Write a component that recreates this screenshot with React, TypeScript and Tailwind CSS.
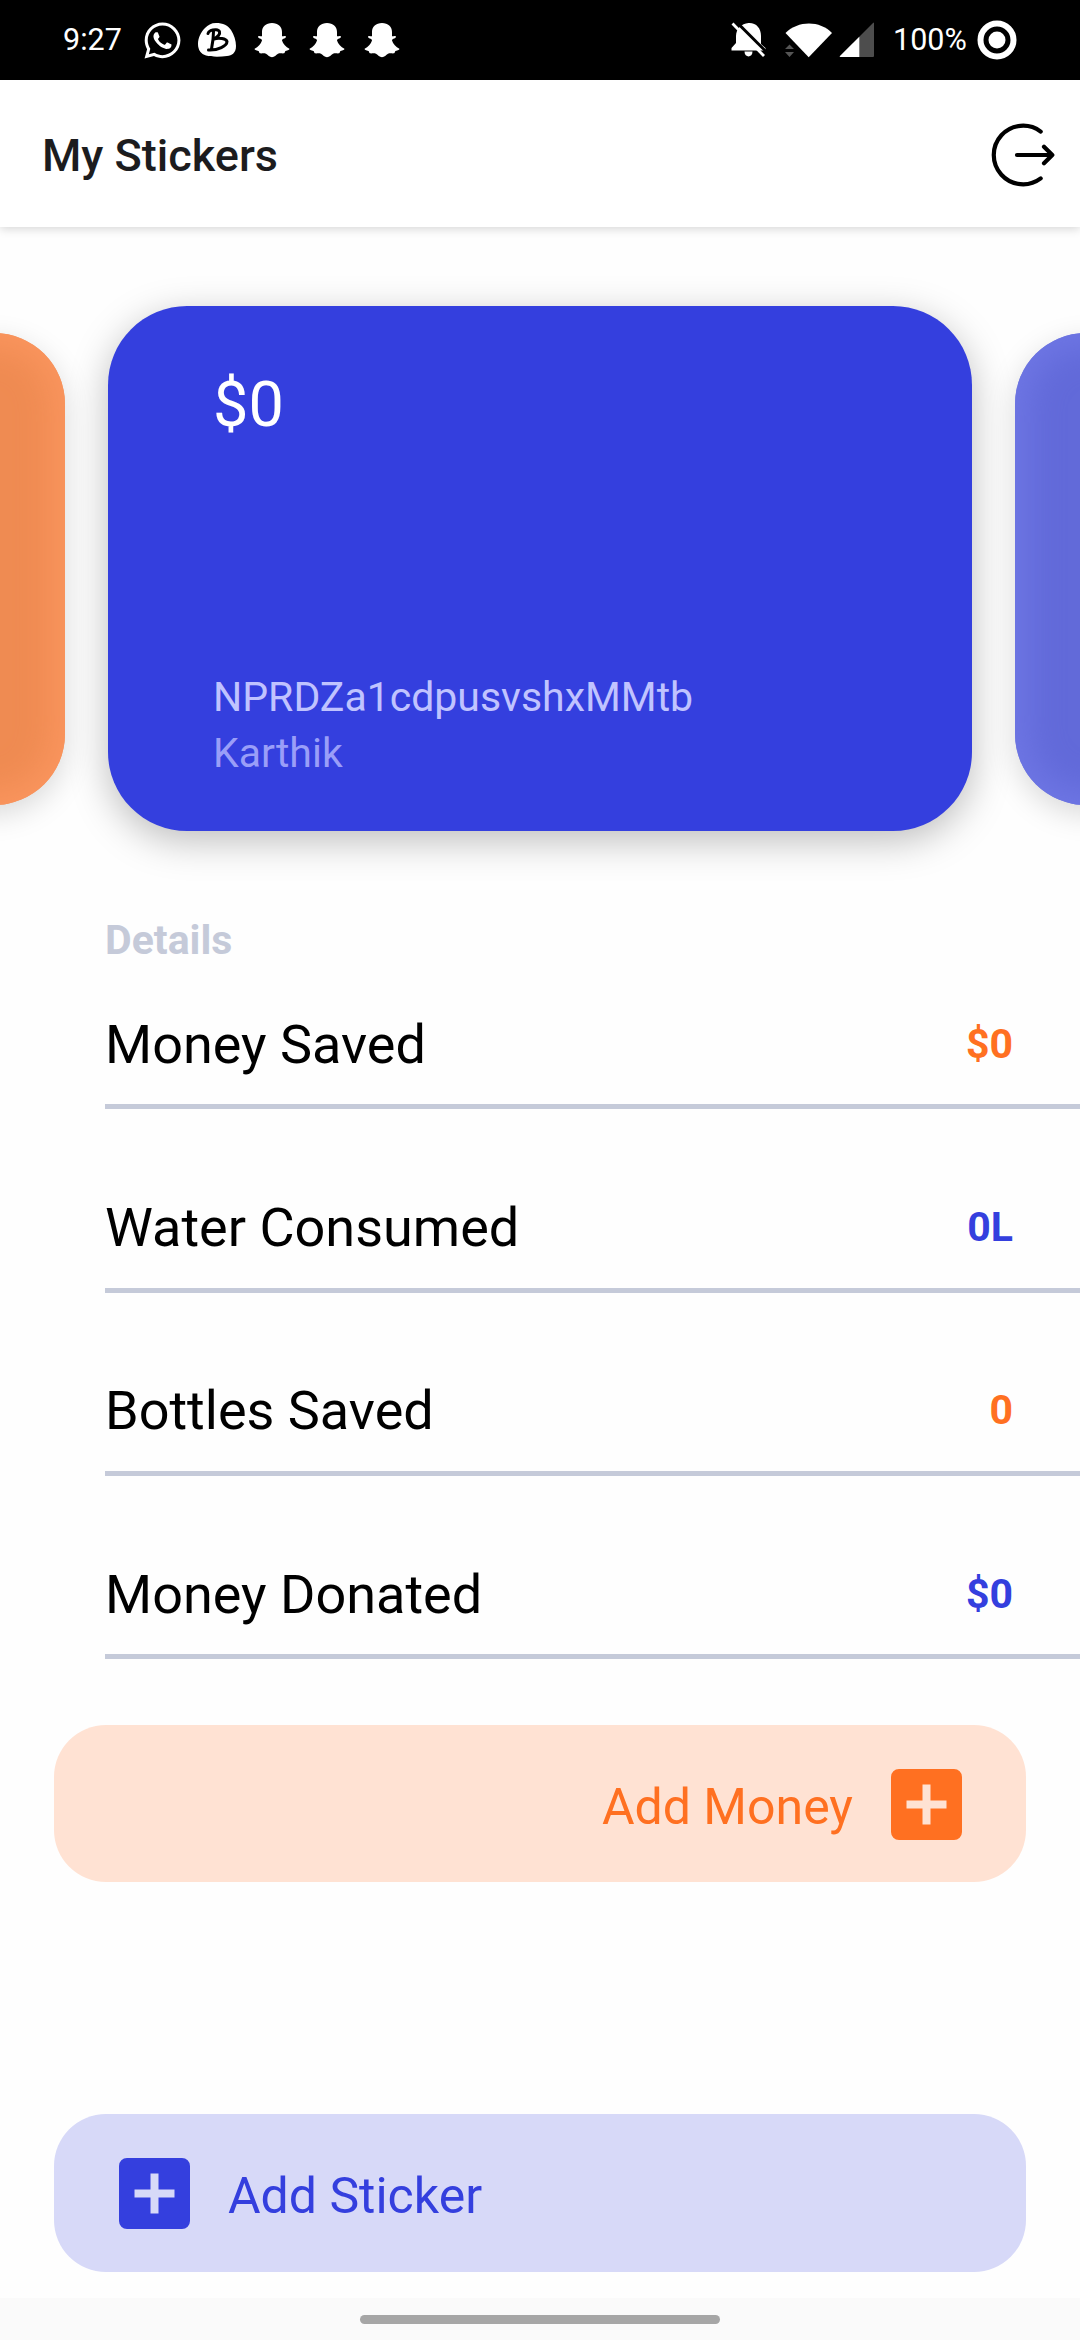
import { FaWhatsapp } from 'react-icons/fa';

const details = [
  { label: 'Money Saved', value: '$0', color: 'text-[#ff7021]', size: 'h-[144px] pb-[27px]' },
  { label: 'Water Consumed', value: '0L', color: 'text-[#343fde]', size: 'h-[184px] pb-[28px]' },
  { label: 'Bottles Saved', value: '0', color: 'text-[#ff7021]', size: 'h-[183px] pb-[28px]' },
  { label: 'Money Donated', value: '$0', color: 'text-[#343fde]', size: 'h-[183px] pb-[27px]' },
];

function GhostIcon() {
  return (
    <svg viewBox="0 0 36 36" className="w-9 h-9 shrink-0" fill="white">
      <path d="M18 1C12 1 8 4.500 8 10V14.300C7 14.600 5.500 13.700 4.300 14.300C3.500 15 4.500 16 5.700 16.500C7 17 8 17.400 8 18.500C7 22 4 25.200 0.600 26.800C0.300 27.800 2 28.500 4.500 29C5.300 29.600 5 31 6 31.300C7.500 31.700 9.800 30.800 12 31.800C14 33 15.500 35.300 18 35.300C20.500 35.300 22 33 24 31.800C26.200 30.800 28.500 31.700 30 31.300C31 31 30.700 29.600 31.500 29C34 28.500 35.700 27.800 35.400 26.800C32 25.200 29 22 28 18.500C28 17.400 29 17 30.300 16.500C31.500 16 32.500 15 31.700 14.300C30.500 13.700 29 14.600 28 14.300V10C28 4.500 24 1 18 1Z" />
    </svg>
  );
}

function BadgeIcon() {
  return (
    <svg viewBox="0 0 38 34" className="w-[38px] h-[34px] shrink-0">
      <path d="M18 0C25 0 30 2.500 33 7C36 11.500 38 18 38 23C38 30 34 32.500 29 33C22 34 13 34 8 32.500C3 31 0 27 0 21C0 15 3 9 7 5C10 2 13 0 18 0Z" fill="white" />
      <path
        d="M10 10.500C10.500 8 14 6.500 18 6.700C22 7 22.500 10 20.500 12.500C19 14.500 17 15.500 16 16C21 14.500 28 15.500 29 18.500C29 23 20 27.500 10.500 27M15.500 8.500C15.500 15 14.500 21 13.500 26"
        fill="none"
        stroke="black"
        strokeWidth="3"
        strokeLinecap="round"
        strokeLinejoin="round"
      />
    </svg>
  );
}

function StatusBar() {
  return (
    <div className="h-20 shrink-0 bg-black text-white flex items-center justify-between px-[63px] text-[30.500px]">
      <div className="flex items-center">
        <span className="w-[80px]">9:27</span>
        <FaWhatsapp className="w-[41px] h-[41px] -ml-px" />
        <div className="flex items-center gap-[19px] ml-[15px]">
          <BadgeIcon />
          <div className="flex items-center gap-[19px] -ml-px">
            <GhostIcon />
            <GhostIcon />
            <GhostIcon />
          </div>
        </div>
      </div>
      <div className="flex items-center">
        <svg viewBox="0 0 36 36" className="w-9 h-9 mr-[18px]">
          <path d="M17.500 1C10.500 1.500 5 7 5 14V21L0.500 26V28.500H34.500V26L30 22V14C30 6 25 0.500 17.500 1ZM13.500 29.500H21.500C21.500 36 13.500 36 13.500 29.500Z" fill="white" />
          <path d="M4 -1.500L37 31.500" stroke="black" strokeWidth="3" />
          <path d="M1.500 1.500L33 34" stroke="white" strokeWidth="2.800" />
        </svg>
        <svg viewBox="0 0 47 36" className="w-[47px] h-9 mr-[7px]">
          <path d="M0.500 11C13 -1.700 35 -1.700 47 11L23.700 35.300Z" fill="white" />
          <path d="M4.500 22.500L9 27H0ZM0 30H9L4.500 35Z" fill="#555" />
        </svg>
        <svg viewBox="0 0 36 36" className="w-9 h-9 mr-[18px]">
          <path d="M35 1V34Q35 35 34 35H1.500Q0 35 1 34L34 1Q35 0 35 1Z" fill="#4d4d4d" />
          <path d="M20.300 14.700V35H1.500Q0 35 1 34Z" fill="white" />
        </svg>
        <span className="w-[73px] mr-[11px]">100%</span>
        <svg viewBox="0 0 40 40" className="w-10 h-10">
          <circle cx="20" cy="20" r="16.500" fill="none" stroke="white" strokeWidth="6" />
          <circle cx="20" cy="20" r="8.500" fill="white" />
        </svg>
      </div>
    </div>
  );
}

function Header() {
  return (
    <div className="relative h-[147px] shrink-0 bg-white flex items-center justify-between pl-[42px] pr-[25px] shadow-[0_2px_9px_rgba(0,0,0,0.16)]">
      <h1 className="text-[45px] leading-[54px] font-medium text-[#1c1c1e] mt-[4px]">My Stickers</h1>
      <svg viewBox="0 0 64 64" className="w-16 h-16 mt-[2px]" fill="none" stroke="black" strokeWidth="4.200" strokeLinecap="round" strokeLinejoin="round">
        <path d="M49.700 8.600A29.300 29.300 0 1 0 49.700 55.400M26 32H60M53 23.700L61.300 32L53 40.300" />
      </svg>
    </div>
  );
}

function Carousel() {
  return (
    <div className="flex items-center justify-center gap-[43px] mt-[79px] h-[525px] shrink-0">
      <div className="w-[778px] h-[472px] shrink-0 rounded-[71px] bg-[#ef8b52] shadow-[0_9px_30px_rgba(0,0,0,0.15),inset_0_0_32px_14px_#fa955e]" />
      <div className="w-[864px] shrink-0 h-full rounded-[79px] bg-[#343fde] shadow-[0_10px_38px_rgba(0,0,0,0.26)] px-[105px] pt-[62px] flex flex-col">
        <span className="text-[63px] leading-[74px] text-white">$0</span>
        <span className="text-[41px] leading-[56px] text-[#c0c3ff] mt-[227px]">NPRDZa1cdpusvshxMMtb</span>
        <span className="text-[41px] leading-[56px] text-[#9a9ef8]">Karthik</span>
      </div>
      <div className="w-[778px] h-[472px] shrink-0 rounded-[71px] bg-[#626ad9] shadow-[0_9px_30px_rgba(0,0,0,0.15),inset_0_0_32px_14px_#6e76e4]" />
    </div>
  );
}

function PlusBox() {
  return (
    <svg viewBox="0 0 71 71" className="w-[71px] h-[71px] mt-px shrink-0" fill="currentColor" fillRule="evenodd">
      <path d="M8 0H63A8 8 0 0 1 71 8V63A8 8 0 0 1 63 71H8A8 8 0 0 1 0 63V8A8 8 0 0 1 8 0ZM31.500 15.500V31.500H15.500V39.500H31.500V55.500H39.500V39.500H55.500V31.500H39.500V15.500Z" />
    </svg>
  );
}

export default function App() {
  return (
    <div className="w-[1080px] h-[2340px] bg-[#fefefe] overflow-hidden flex flex-col font-[Roboto,sans-serif]">
      <StatusBar />
      <Header />
      <Carousel />

      <div className="mt-[84px] pl-[105px] shrink-0">
        <h2 className="text-[41px] leading-[50px] font-bold text-[#c5cad9]">Details</h2>
        {details.map((d) => (
          <div key={d.label} className={`flex items-end justify-between pr-[67px] border-b-[5px] border-[#c5cad9] ${d.size}`}>
            <span className="text-[54px] leading-[64px] text-black">{d.label}</span>
            <span className={`text-[41px] leading-[64px] mb-px font-bold ${d.color}`}>{d.value}</span>
          </div>
        ))}
      </div>

      <button className="mt-[66px] mx-[54px] h-[157px] shrink-0 rounded-[52px] bg-[#ffe2d3] text-[#ff7021] flex items-center justify-end gap-[38px] pr-[64px]">
        <span className="text-[50px] leading-[60px] pt-[7px]">Add Money</span>
        <PlusBox />
      </button>

      <button className="mt-auto mx-[54px] h-[158px] shrink-0 rounded-[52px] bg-[#d7d9f8] text-[#343fde] flex items-center gap-[38px] pl-[65px]">
        <PlusBox />
        <span className="text-[50px] leading-[60px] pt-[6px]">Add Sticker</span>
      </button>

      <div className="mt-[26px] h-[42px] shrink-0 bg-[#fafafa] flex justify-center pt-[17px]">
        <div className="w-[360px] h-[9px] rounded-full bg-[#a6a6a6]" />
      </div>
    </div>
  );
}
